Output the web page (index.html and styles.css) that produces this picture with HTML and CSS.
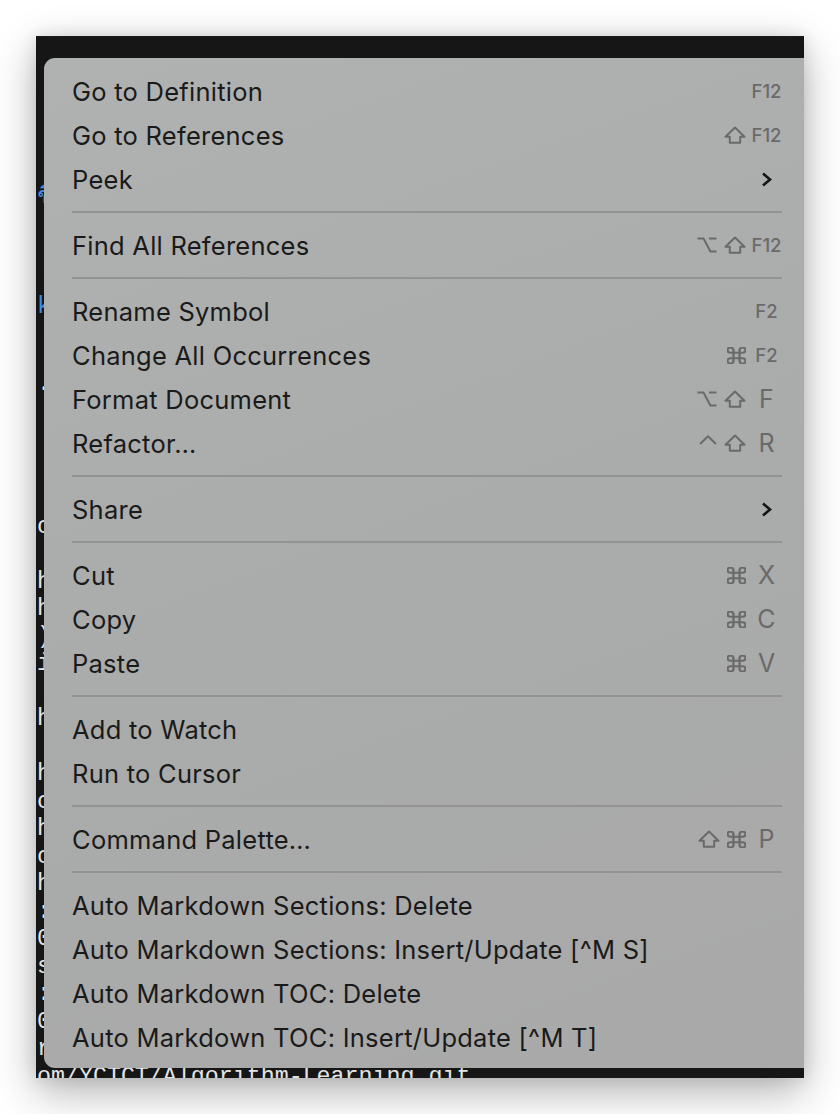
FILE: index.html
```html
<!DOCTYPE html>
<html lang="en">
<head>
<meta charset="utf-8">
<title>Context menu</title>
<link rel="stylesheet" href="styles.css">
</head>
<body>
<div class="window">
<pre class="term"><span class="ln"> </span>
<span class="ln"> </span>
<span class="ln"> </span>
<span class="ln"> </span>
<span class="ln"> </span>
<span class="ln blue">ชี่ main</span>
<span class="ln"> </span>
<span class="ln"> </span>
<span class="ln"> </span>
<span class="ln blue">k| develop</span>
<span class="ln"> </span>
<span class="ln"> </span>
<span class="ln">·</span>
<span class="ln"> </span>
<span class="ln"> </span>
<span class="ln"> </span>
<span class="ln"> </span>
<span class="ln">cd Algorithm-Learning</span>
<span class="ln"> </span>
<span class="ln">hint: Using 'master' as the name</span>
<span class="ln">hint: is subject to change.</span>
<span class="ln">)</span>
<span class="ln">init</span>
<span class="ln"> </span>
<span class="ln">hint: git branch -m &lt;name&gt;</span>
<span class="ln"> </span>
<span class="ln">hint: git config</span>
<span class="ln">commit</span>
<span class="ln">hint: git add</span>
<span class="ln">create mode 100644</span>
<span class="ln">hint: git push</span>
<span class="ln">:</span>
<span class="ln">0 files changed</span>
<span class="ln">ssh-add</span>
<span class="ln">:</span>
<span class="ln">0 insertions</span>
<span class="ln">remote add origin https://github.c</span>
<span class="ln">om/YCTCT/Algorithm-Learning.git</span></pre>

  <div class="menu">
    <div class="item"><span class="label">Go to Definition</span><span class="sc"><span class="mods"></span><span class="key fn">F12</span></span></div>
    <div class="item"><span class="label">Go to References</span><span class="sc"><span class="mods"><svg class="g shift" viewBox="0 0 22 18"><path d="M11 1.5 L20.5 10.8 H16.2 V16.8 H5.8 V10.8 H1.5 Z"/></svg></span><span class="key fn">F12</span></span></div>
    <div class="item"><span class="label">Peek</span><span class="sc"><span class="mods"></span><span class="key"><svg class="chev" viewBox="0 0 11 15"><path d="M2 1.5 L9 7.5 L2 13.5"/></svg></span></span></div>
    <div class="sep"></div>
    <div class="item"><span class="label">Find All References</span><span class="sc"><span class="mods"><svg class="g opt" viewBox="0 0 20 16"><path d="M0.5 1.5 H6.5 L13.5 14.5 H19.5 M12 1.5 H19.5"/></svg><svg class="g shift" viewBox="0 0 22 18"><path d="M11 1.5 L20.5 10.8 H16.2 V16.8 H5.8 V10.8 H1.5 Z"/></svg></span><span class="key fn">F12</span></span></div>
    <div class="sep"></div>
    <div class="item"><span class="label">Rename Symbol</span><span class="sc"><span class="mods"></span><span class="key fn">F2</span></span></div>
    <div class="item"><span class="label">Change All Occurrences</span><span class="sc"><span class="mods"><svg class="g cmd" viewBox="2.6 2.6 18.8 18.8" preserveAspectRatio="none"><path d="M15 6v12a3 3 0 1 0 3-3H6a3 3 0 1 0 3 3V6a3 3 0 1 0-3 3h12a3 3 0 1 0-3-3"/></svg></span><span class="key fn">F2</span></span></div>
    <div class="item"><span class="label">Format Document</span><span class="sc"><span class="mods"><svg class="g opt" viewBox="0 0 20 16"><path d="M0.5 1.5 H6.5 L13.5 14.5 H19.5 M12 1.5 H19.5"/></svg><svg class="g shift" viewBox="0 0 22 18"><path d="M11 1.5 L20.5 10.8 H16.2 V16.8 H5.8 V10.8 H1.5 Z"/></svg></span><span class="key">F</span></span></div>
    <div class="item"><span class="label">Refactor…</span><span class="sc"><span class="mods"><svg class="g ctrl" viewBox="0 0 18 10"><path d="M1 9 L9 1.2 L17 9"/></svg><svg class="g shift" viewBox="0 0 22 18"><path d="M11 1.5 L20.5 10.8 H16.2 V16.8 H5.8 V10.8 H1.5 Z"/></svg></span><span class="key">R</span></span></div>
    <div class="sep"></div>
    <div class="item"><span class="label">Share</span><span class="sc"><span class="mods"></span><span class="key"><svg class="chev" viewBox="0 0 11 15"><path d="M2 1.5 L9 7.5 L2 13.5"/></svg></span></span></div>
    <div class="sep"></div>
    <div class="item"><span class="label">Cut</span><span class="sc"><span class="mods"><svg class="g cmd" viewBox="2.6 2.6 18.8 18.8" preserveAspectRatio="none"><path d="M15 6v12a3 3 0 1 0 3-3H6a3 3 0 1 0 3 3V6a3 3 0 1 0-3 3h12a3 3 0 1 0-3-3"/></svg></span><span class="key">X</span></span></div>
    <div class="item"><span class="label">Copy</span><span class="sc"><span class="mods"><svg class="g cmd" viewBox="2.6 2.6 18.8 18.8" preserveAspectRatio="none"><path d="M15 6v12a3 3 0 1 0 3-3H6a3 3 0 1 0 3 3V6a3 3 0 1 0-3 3h12a3 3 0 1 0-3-3"/></svg></span><span class="key">C</span></span></div>
    <div class="item"><span class="label">Paste</span><span class="sc"><span class="mods"><svg class="g cmd" viewBox="2.6 2.6 18.8 18.8" preserveAspectRatio="none"><path d="M15 6v12a3 3 0 1 0 3-3H6a3 3 0 1 0 3 3V6a3 3 0 1 0-3 3h12a3 3 0 1 0-3-3"/></svg></span><span class="key">V</span></span></div>
    <div class="sep"></div>
    <div class="item"><span class="label">Add to Watch</span></div>
    <div class="item"><span class="label">Run to Cursor</span></div>
    <div class="sep"></div>
    <div class="item"><span class="label">Command Palette…</span><span class="sc"><span class="mods"><svg class="g shift" viewBox="0 0 22 18"><path d="M11 1.5 L20.5 10.8 H16.2 V16.8 H5.8 V10.8 H1.5 Z"/></svg><svg class="g cmd" viewBox="2.6 2.6 18.8 18.8" preserveAspectRatio="none"><path d="M15 6v12a3 3 0 1 0 3-3H6a3 3 0 1 0 3 3V6a3 3 0 1 0-3 3h12a3 3 0 1 0-3-3"/></svg></span><span class="key">P</span></span></div>
    <div class="sep"></div>
    <div class="item"><span class="label">Auto Markdown Sections: Delete</span></div>
    <div class="item"><span class="label">Auto Markdown Sections: Insert/Update [^M S]</span></div>
    <div class="item"><span class="label">Auto Markdown TOC: Delete</span></div>
    <div class="item"><span class="label">Auto Markdown TOC: Insert/Update [^M T]</span></div>
  </div>
</div>
</body>
</html>
```

FILE: styles.css
```css
html, body {
  margin: 0;
  padding: 0;
  background: #ffffff;
}

body {
  width: 840px;
  height: 1114px;
  overflow: hidden;
}

.window {
  position: relative;
  margin: 36px 0 0 36px;
  width: 768px;
  height: 1042px;
  background: #161616;
  border-top: 1px solid #1b1b1b;
  box-sizing: border-box;
  overflow: hidden;
  box-shadow: 0 14px 40px rgba(0, 0, 0, 0.30), 0 0 16px rgba(0, 0, 0, 0.10);
}

.term {
  margin: 0;
  padding: 9px 0 0 1px;
  font-family: "Liberation Mono", "DejaVu Sans Mono", monospace;
  font-size: 23.3px;
  line-height: 27.5px;
  color: #e4e4e4;
  white-space: pre;
}

.term .blue {
  color: #3f8ee6;
}

.menu {
  position: absolute;
  left: 8px;
  top: 21px;
  width: 760px;
  box-sizing: border-box;
  padding: 11px 22px 9px 28px;
  border-radius: 11px 0 0 11px;
  background: linear-gradient(160deg, #b0b2b2 0%, #aaabab 50%, #a9a9a9 100%);
  font-family: Inter, "Noto Sans", sans-serif;
  color: #1a1a1a;
}

.item {
  display: flex;
  align-items: center;
  height: 44px;
}

.label {
  flex: 1;
  font-size: 25.5px;
  letter-spacing: 0.25px;
  white-space: nowrap;
}

.sc {
  display: flex;
  align-items: center;
  color: #6a6a6a;
}

.mods {
  display: flex;
  align-items: center;
  gap: 7px;
}

.key {
  width: 31px;
  margin-left: 5px;
  text-align: center;
  font-size: 25px;
  display: flex;
  justify-content: center;
  align-items: center;
}

.key.fn {
  font-size: 18.5px;
  font-weight: 500;
}

.g {
  fill: none;
  stroke: #6a6a6a;
  stroke-width: 2;
  stroke-linejoin: round;
  stroke-linecap: butt;
}

.shift {
  width: 22px;
  height: 18px;
  margin-bottom: 1px;
}

.opt {
  width: 20px;
  height: 16px;
}

.cmd {
  width: 19px;
  height: 17px;
  stroke-width: 2.3;
}

.ctrl {
  width: 18px;
  height: 10px;
  margin-bottom: 7px;
}

.chev {
  width: 11px;
  height: 15px;
  fill: none;
  stroke: #151515;
  stroke-width: 2.6;
  stroke-linejoin: miter;
}

.sep {
  height: 2px;
  margin: 10px 0;
  background: #929392;
}
```
